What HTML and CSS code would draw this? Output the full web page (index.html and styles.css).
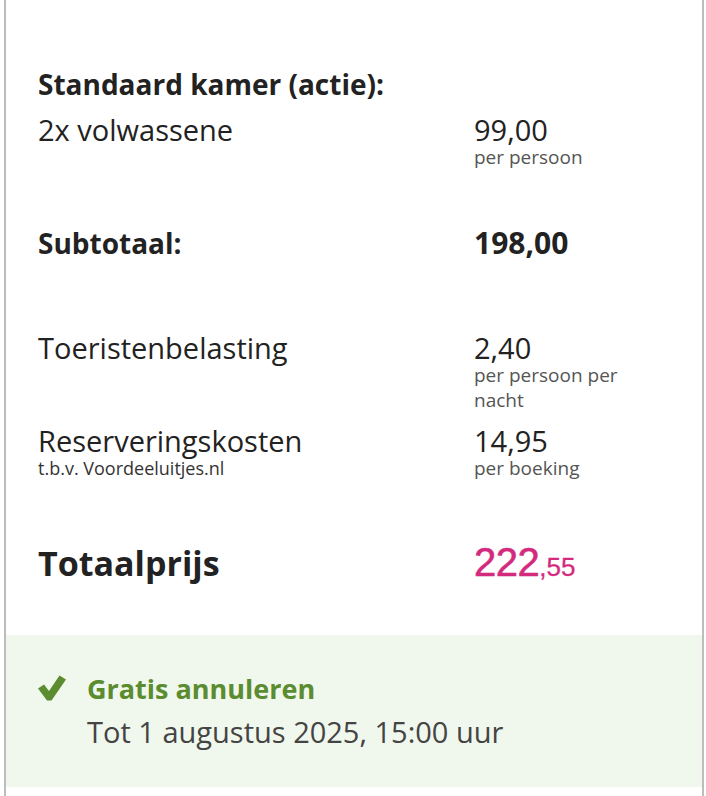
FILE: index.html
```html
<!DOCTYPE html>
<html lang="nl">
<head>
<meta charset="utf-8">
<title>Prijsoverzicht</title>
<link rel="stylesheet" href="styles.css">
</head>
<body>
<div class="card">
  <section class="room">
    <h2 class="room-title">Standaard kamer (actie):</h2>
    <div class="row">
      <div class="label">2x volwassene</div>
      <div class="value">
        <div class="amount">99,00</div>
        <div class="note">per persoon</div>
      </div>
    </div>
  </section>

  <div class="row subtotal">
    <div class="label strong">Subtotaal:</div>
    <div class="value"><div class="amount strong">198,00</div></div>
  </div>

  <div class="row tax">
    <div class="label">Toeristenbelasting</div>
    <div class="value">
      <div class="amount">2,40</div>
      <div class="note">per persoon per nacht</div>
    </div>
  </div>

  <div class="row fee">
    <div class="label">
      <div>Reserveringskosten</div>
      <div class="sub">t.b.v. Voordeeluitjes.nl</div>
    </div>
    <div class="value">
      <div class="amount">14,95</div>
      <div class="note">per boeking</div>
    </div>
  </div>

  <div class="row total">
    <div class="total-label">Totaalprijs</div>
    <div class="total-price"><span class="euros">222</span><span class="cents">,55</span></div>
  </div>

  <div class="cancel">
    <svg class="check" width="28" height="26" viewBox="0 0 28 26" aria-hidden="true">
      <path d="M0 13.5 L6 9.5 L11 16 L21.5 0.5 L28 4.5 L13.5 25.5 L9 25.5 Z" fill="#5b8c30"/>
    </svg>
    <div class="cancel-text">
      <div class="cancel-title">Gratis annuleren</div>
      <div class="cancel-date">Tot 1 augustus 2025, 15:00 uur</div>
    </div>
  </div>
</div>
</body>
</html>
```

FILE: styles.css
```css
html, body {
  margin: 0;
  padding: 0;
  background: #ffffff;
}

body {
  font-family: "Open Sans", "DejaVu Sans", sans-serif;
  color: #222222;
}

.card {
  margin: 0 2px 0 4px;
  border-left: 2px solid #bdbdbd;
  border-right: 2px solid #bdbdbd;
  padding-top: 67px;
  padding-bottom: 20px;
}

.room-title {
  margin: 0 0 14px 0;
  padding: 0 34px 0 32px;
  font-size: 28px;
  line-height: 34px;
  font-weight: 700;
}

.row {
  display: grid;
  grid-template-columns: 1fr 194px;
  padding: 0 34px 0 32px;
}

.label {
  font-size: 29px;
  line-height: 30px;
}

.strong {
  font-weight: 700;
}

.sub {
  font-size: 18px;
  line-height: 25px;
  color: #333333;
}

.amount {
  font-size: 29px;
  line-height: 30px;
}

.note {
  font-size: 19px;
  line-height: 25px;
  color: #555555;
}

.subtotal {
  margin-top: 58px;
}

.subtotal .label {
  font-size: 28px;
}

.subtotal .amount {
  font-size: 30px;
}

.tax {
  margin-top: 75px;
}

.fee {
  margin-top: 13px;
}

.total {
  margin-top: 57px;
  align-items: baseline;
}

.total-label {
  font-size: 34px;
  line-height: 48px;
  font-weight: 700;
}

.total-price {
  font-family: "Liberation Sans", Arial, sans-serif;
  color: #d42a7d;
  line-height: 48px;
}

.euros {
  font-size: 40px;
  letter-spacing: -0.5px;
  -webkit-text-stroke: 0.6px #d42a7d;
}

.cents {
  font-size: 26px;
  -webkit-text-stroke: 0.3px #d42a7d;
}

.cancel {
  margin-top: 40px;
  background: #f0f7ec;
  padding: 39px 34px 40px 32px;
  display: flex;
  gap: 21px;
  align-items: flex-start;
}

.check {
  flex: none;
  margin-top: 1px;
}

.cancel-title {
  font-size: 27px;
  line-height: 30px;
  font-weight: 700;
  color: #5b8c30;
}

.cancel-date {
  margin-top: 13px;
  font-size: 29px;
  line-height: 30px;
  color: #444444;
}
```
